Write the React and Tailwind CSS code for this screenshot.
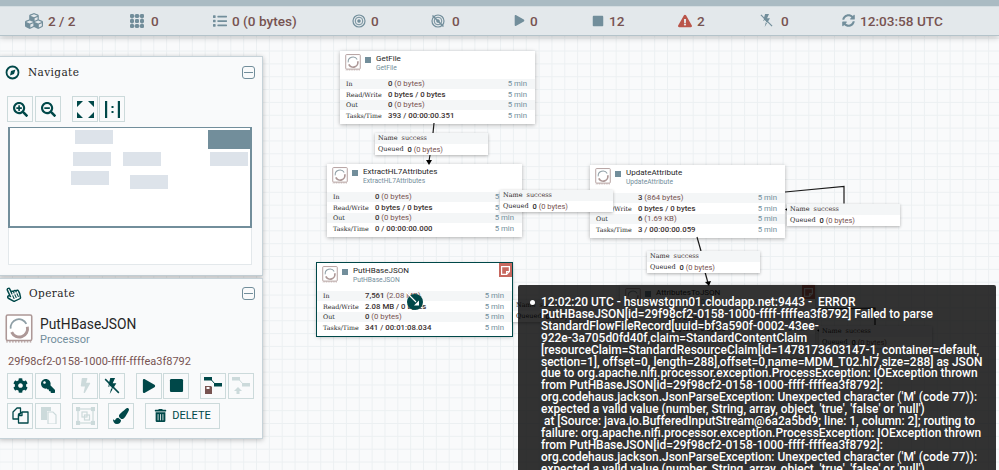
import {
  FaCog, FaKey, FaBolt, FaPlay, FaStop, FaTrashAlt, FaPaintBrush, FaSearchPlus, FaSearchMinus,
  FaExclamationTriangle, FaCubes, FaSyncAlt, FaList, FaRegHandPointer,
} from 'react-icons/fa'

const STATUS = [
  { w: 'w-[105px]', icon: <FaCubes size={18} className="text-[#728e9b]" />, text: '2 / 2' },
  { w: 'w-[83px]', icon: <GridIcon />, text: '0', gap: 'gap-[7px]' },
  { w: 'w-[139px]', icon: <FaList size={14} className="text-[#728e9b]" />, text: '0 (0 bytes)' },
  { w: 'w-[79px]', icon: <TargetIcon />, text: '0' },
  { w: 'w-[83px]', icon: <TargetIcon off />, text: '0', gap: 'gap-[7px]' },
  { w: 'w-[78px]', icon: <FaPlay size={11} className="text-[#728e9b]" />, text: '0' },
  { w: 'w-[86px]', icon: <FaStop size={12} className="text-[#728e9b]" />, text: '12' },
  { w: 'w-[82px]', icon: <FaExclamationTriangle size={14} className="text-[#ba554a]" />, text: '2' },
  { w: 'w-[82px]', icon: <BoltOff size={13} color="#728e9b" bg="#e3e8eb" />, text: '0', gap: 'gap-[8px]' },
  { w: 'w-auto', icon: <FaSyncAlt size={13} className="text-[#728e9b]" />, text: '12:03:58 UTC' },
]

const NODES = [
  { name: 'GetFile', pos: 'left-[340px] top-[51px]', rows: [['0', ' (0 bytes)'], ['0 bytes / 0 bytes', ''], ['0', ' (0 bytes)'], ['393 / 00:00:00.351', '']] },
  { name: 'ExtractHL7Attributes', pos: 'left-[327px] top-[164px]', rows: [['0', ' (0 bytes)'], ['0 bytes / 0 bytes', ''], ['0', ' (0 bytes)'], ['0 / 00:00:00.000', '']] },
  { name: 'UpdateAttribute', pos: 'left-[590px] top-[165px]', rows: [['3', ' (864 bytes)'], ['0 bytes / 0 bytes', ''], ['6', ' (1.69 KB)'], ['3 / 00:00:00.059', '']] },
  { name: 'PutHBaseJSON', pos: 'left-[317px] top-[263px]', selected: true, bulletin: true, rows: [['7,561', ' (2.08 MB)'], ['2.08 MB / 0 bytes', ''], ['0', ' (0 bytes)'], ['341 / 00:01:08.034', '']] },
  { name: 'AttributesToJSON', pos: 'left-[620px] top-[285px]', bulletin: true, rows: [['0', ' (0 bytes)'], ['0 bytes / 0 bytes', ''], ['0', ' (0 bytes)'], ['0 / 00:00:00.000', '']] },
]
const LABELS = ['In', 'Read/Write', 'Out', 'Tasks/Time']

const CONNS = [
  'left-[375px] top-[133px]',
  'left-[500px] top-[190px]',
  'left-[787px] top-[204px]',
  'left-[647px] top-[251px]',
  'left-[513px] top-[300px]',
  'left-[819px] top-[326px]',
]

const MINIMAP = [
  ['w-[38px] h-[14px] left-[65px] top-[2px]', 'bg-[#dde3ea]'],
  ['w-[38px] h-[14px] left-[63px] top-[24px]', 'bg-[#dde3ea]'],
  ['w-[38px] h-[14px] left-[113px] top-[24px]', 'bg-[#dde3ea]'],
  ['w-[38px] h-[14px] left-[61px] top-[43px]', 'bg-[#dde3ea]'],
  ['w-[38px] h-[14px] left-[120px] top-[47px]', 'bg-[#dde3ea]'],
  ['w-[42px] h-[19px] left-[198px] top-[2px]', 'bg-[#728e9b]'],
  ['w-[38px] h-[14px] left-[200px] top-[24px]', 'bg-[#dde3ea]'],
]

const BULLETIN = [
  '12:02:20 UTC - hsuswstgnn01.cloudapp.net:9443 -  ERROR',
  'PutHBaseJSON[id=29f98cf2-0158-1000-ffff-ffffea3f8792] Failed to parse',
  'StandardFlowFileRecord[uuid=bf3a590f-0002-43ee-',
  '922e-3a705d0fd40f,claim=StandardContentClaim',
  '[resourceClaim=StandardResourceClaim[id=1478173603147-1, container=default,',
  'section=1], offset=0, length=288],offset=0,name=MDM_T02.hl7,size=288] as JSON',
  'due to org.apache.nifi.processor.exception.ProcessException: IOException thrown',
  'from PutHBaseJSON[id=29f98cf2-0158-1000-ffff-ffffea3f8792]:',
  "org.codehaus.jackson.JsonParseException: Unexpected character ('M' (code 77)):",
  "expected a valid value (number, String, array, object, 'true', 'false' or 'null')",
  ' at [Source: java.io.BufferedInputStream@6a2a5bd9; line: 1, column: 2]; routing to',
  'failure: org.apache.nifi.processor.exception.ProcessException: IOException thrown',
  'from PutHBaseJSON[id=29f98cf2-0158-1000-ffff-ffffea3f8792]:',
  "org.codehaus.jackson.JsonParseException: Unexpected character ('M' (code 77)):",
  "expected a valid value (number, String, array, object, 'true', 'false' or 'null')",
]

function GridIcon() {
  return (
    <svg width="14" height="14" viewBox="0 0 14 14" fill="#728e9b">
      {[0, 5, 10].map(y => [0, 5, 10].map(x => <rect key={`${x}${y}`} x={x} y={y} width="4" height="4" rx="1.3" />))}
      <path d="M2 2h10v10H2z" fill="none" stroke="#728e9b" strokeWidth=".8" />
    </svg>
  )
}

function TargetIcon({ off }) {
  return (
    <svg width="14" height="14" viewBox="0 0 14 14" fill="none" stroke="#728e9b">
      <circle cx="7" cy="7" r="6" strokeWidth="1.2" />
      <circle cx="7" cy="7" r="3.8" strokeWidth="1" />
      <circle cx="7" cy="7" r="1.5" fill="#728e9b" strokeWidth=".5" />
      {off && <path d="M1.5 1.5l11 11" strokeWidth="1.5" />}
    </svg>
  )
}

function BoltOff({ size = 14, color = '#004849', bg = '#f9fafb' }) {
  return (
    <svg width={size} height={size} viewBox="0 0 14 14" fill={color}>
      <path d="M5.5 0h4.2L7.6 4.6h3.2L5 14l1.7-6.6H3.4z" />
      <path d="M1 1l12 12" stroke={color} strokeWidth="1.3" />
      <path d="M0 2.2l11.5 11.5" stroke={bg} strokeWidth=".8" />
    </svg>
  )
}

function ProcIcon({ size = 16 }) {
  return (
    <svg width={size} height={size * 1.05} viewBox="0 0 28 30" fill="none">
      <rect x="1" y="1" width="26" height="26" rx="1.500" fill="#fff" stroke="#ad9897" strokeWidth="1.600" />
      <path d="M1 28.500h26" stroke="#ad9897" strokeWidth="1.400" strokeDasharray="1.500 1.500" />
      <path d="M5.500 15A8.500 8.500 0 0 1 21.500 10" stroke="#8f9fa6" strokeWidth="1.800" />
      <path d="M22.500 13A8.500 8.500 0 0 1 6.500 18.500" stroke="#ad9897" strokeWidth="3" />
    </svg>
  )
}

function Collapse() {
  return (
    <div className="w-[13px] h-[13px] rounded-[3px] border border-[#728e9b] flex items-center justify-center">
      <div className="w-[9px] h-[1.5px] bg-[#728e9b]" />
    </div>
  )
}

function Btn({ children, className = 'w-[26px]' }) {
  return (
    <div className={`h-[26px] border border-[#ccdadb] flex items-center justify-center ${className}`}>
      {children}
    </div>
  )
}

function FitIcon() {
  return (
    <svg width="17" height="17" viewBox="0 0 17 17" fill="#004849">
      <path d="M0 0h6L0 6zM17 0h-6l6 6zM0 17h6l-6-6zM17 17h-6l6-6z" />
    </svg>
  )
}

function ActualIcon() {
  return (
    <svg width="17" height="17" viewBox="0 0 17 17" fill="#004849">
      <path d="M1 0h2.200v17H1zM13.800 0H16v17h-2.200zM7.500 5h2v2h-2zM7.500 10h2v2h-2z" />
    </svg>
  )
}

function CopyIcon({ color }) {
  return (
    <svg width="17" height="17" viewBox="0 0 17 17" fill="none" stroke={color} strokeWidth="1.300" strokeLinejoin="round">
      <path d="M1 11V5l4-4h3.500v5L6.500 7v5H1z" fill="#f9fafb" />
      <path d="M6.500 16V8.500l3.500-3.500h6v11z" fill="#f9fafb" />
      <path d="M6.500 8.500H10V5" />
    </svg>
  )
}

function PasteIcon() {
  return (
    <svg width="17" height="17" viewBox="0 0 17 17" fill="#ccdadb">
      <path d="M1 0h10v4H7v9H1z" />
      <path d="M8 5h5l3 3v9H8z" fill="none" stroke="#ccdadb" strokeWidth="1.200" />
    </svg>
  )
}

function CreateTemplate({ off }) {
  const c = off ? '#ccdadb' : '#004849'
  return (
    <svg width="18" height="18" viewBox="0 0 18 18" fill={c}>
      <rect x="0" y="0" width="8" height="3.500" />
      <rect x="10" y="6" width="8" height="3.500" />
      <path d="M7 2.500l4 4.500" stroke={c} fill="none" />
      {off
        ? <path d="M6 10l4 4H7.500v3h-3v-3H2z" />
        : <path d="M1 9h6l1 1v7H1z M2.500 10v2h3v-2z" fill="#775351" />}
    </svg>
  )
}

function GroupIcon() {
  return (
    <svg width="19" height="18" viewBox="0 0 19 18" fill="none" stroke="#ccdadb" strokeWidth="1.200">
      <rect x="2" y="2" width="15" height="14" />
      <rect x="0.500" y="0.500" width="3" height="3" fill="#ccdadb" />
      <rect x="15.500" y="0.500" width="3" height="3" fill="#ccdadb" />
      <rect x="0.500" y="14.500" width="3" height="3" fill="#ccdadb" />
      <rect x="15.500" y="14.500" width="3" height="3" fill="#ccdadb" />
      <rect x="6" y="5" width="5" height="5" />
      <rect x="8.500" y="8" width="5" height="5" />
    </svg>
  )
}

function Node({ node }) {
  return (
    <div className={`absolute ${node.pos} w-[195px] h-[73px] bg-white shadow-[0_1px_4px_rgba(0,0,0,0.3)] ${node.selected ? 'outline outline-1 outline-[#004849]' : ''}`}>
      <div className="flex h-[28px] pl-[5px] pt-[3px]">
        <ProcIcon />
        <div className="w-[6px] h-[6px] bg-[#728e9b] ml-[4px] mt-[3px]" />
        <div className="ml-[5px] leading-none">
          <div className="font-['Roboto',sans-serif] text-[8px] text-[#262626] mt-[1px] whitespace-nowrap">{node.name}</div>
          <div className="font-['Roboto',sans-serif] text-[6.7px] text-[#728e9b] mt-[2px] whitespace-nowrap">{node.name}</div>
        </div>
      </div>
      {LABELS.map((label, i) => (
        <div key={label} className={`flex items-center pl-[6px] pr-[8px] text-[7.8px] ${i === 3 ? 'h-[12px]' : 'h-[10.3px]'} ${i % 2 === 0 ? 'bg-[#f4f6f7]' : 'bg-white'}`}>
          <span className="w-[42px] font-['DejaVu_Serif',serif] text-[6.3px] text-[#262626] whitespace-nowrap">{label}</span>
          <span className="flex-1 font-['Roboto',sans-serif] font-medium text-[#3a3130] whitespace-nowrap">
            {node.rows[i][0]}<span className="font-normal text-[#775351]">{node.rows[i][1]}</span>
          </span>
          <span className="font-['Roboto',sans-serif] text-[#728e9b]">5 min</span>
        </div>
      ))}
      {node.bulletin && (
        <div className="absolute right-0 top-0 w-[13px] h-[14px] bg-[#c7685f] flex items-center justify-center">
          <svg width="9" height="9" viewBox="0 0 9 9" fill="none" stroke="#fff" strokeWidth="1.200">
            <path d="M.6.6h7.800v5L5.600 8.400H.6z" />
            <path d="M5.600 8.400V5.600h2.800" />
          </svg>
        </div>
      )}
    </div>
  )
}

function ConnLabel({ pos }) {
  return (
    <div className={`absolute ${pos} w-[113px] bg-white shadow-[0_1px_3px_rgba(0,0,0,0.3)] text-[6.5px] text-[#262626] leading-none font-['DejaVu_Serif',serif]`}>
      <div className="h-[11px] flex items-center pl-[3px] gap-[4px] bg-[#f4f6f7] whitespace-nowrap">
        <span>Name</span><span className="text-[#4a3a39]">success</span>
      </div>
      <div className="h-[11px] flex items-center pl-[3px] gap-[4px] whitespace-nowrap">
        <span>Queued</span>
        <span className="font-['Roboto',sans-serif] text-[7.5px]"><b className="font-medium">0</b> <span className="text-[#775351]">(0 bytes)</span></span>
      </div>
    </div>
  )
}

function Links() {
  return (
    <svg className="absolute inset-0 pointer-events-none" width="999" height="470" fill="none" stroke="#1a1a1a" strokeWidth="1.200">
      <path d="M434 123l-1 10" />
      <path d="M430 155l-1 6" />
      <path d="M426 160h6l-3 5z" fill="#000" stroke="none" />
      <path d="M785 192l59-5.500v17" />
      <path d="M789 207v5l-4-2.500z" fill="#000" stroke="none" />
      <path d="M697 237l4 14" />
      <path d="M705 272l3 11" />
      <path d="M705 282l6-1-2 5z" fill="#000" stroke="none" />
      <path d="M816 309l59-1v17" />
      <path d="M821 328v5l-4-2.500z" fill="#000" stroke="none" />
    </svg>
  )
}

export default function App() {
  return (
    <div className="relative w-[999px] h-[470px] overflow-hidden bg-[#f9fafb] bg-[linear-gradient(to_right,#ecf0f2_1px,transparent_1px),linear-gradient(to_bottom,#ecf0f2_1px,transparent_1px)] bg-[size:12.85px_12.85px] bg-[position:12px_12px]">
      {/* Status bar */}
      <div className="relative z-20 shadow-[0_2px_6px_rgba(0,0,0,0.2)]">
        <div className="h-[6px] bg-[#aabbc3]" />
        <div className="h-[30px] bg-[#e3e8eb] border-t border-b border-t-[#d4dde1] border-b-[#b4c3ca] pl-[25px] flex items-center font-['Roboto',sans-serif] font-medium text-[13.6px] text-[#775351]">
          {STATUS.map((s, i) => (
            <div key={i} className={`flex items-center shrink-0 ${s.w} ${s.gap || 'gap-[5px]'}`}>
              {s.icon}<span>{s.text}</span>
            </div>
          ))}
        </div>
      </div>

      {/* Canvas */}
      {NODES.map(n => <Node key={n.name} node={n} />)}
      <Links />
      {CONNS.map(c => <ConnLabel key={c} pos={c} />)}

      <div className="absolute left-[407px] top-[294px] w-[16px] h-[16px] rounded-full bg-[#004849] flex items-center justify-center">
        <svg width="16" height="16" viewBox="0 0 16 16" className="overflow-visible">
          <path d="M-1-2L9 8" stroke="#fff" strokeWidth="1.100" />
          <path d="M12 11.500V6.500L7 11.500z" fill="#fff" />
        </svg>
      </div>

      {/* Navigate */}
      <div className="absolute z-10 left-[-1px] top-[56px] w-[264px] h-[220px] bg-[#f9fafb] border border-[#c6d2d8] shadow-[0_1px_5px_rgba(0,0,0,0.25)] pl-[7px] pr-[7px]">
        <div className="flex items-center justify-between h-[30px] pt-[1px] -ml-[2px]">
          <div className="flex items-center gap-[8px]">
            <svg width="15" height="15" viewBox="0 0 15 15" fill="none" stroke="#004849">
              <circle cx="7.500" cy="7.500" r="6" strokeWidth="1.800" />
              <path d="M10.500 4.500L9 9 5 10.500 6 6z" fill="#004849" stroke="none" />
            </svg>
            <span className="font-['DejaVu_Serif',serif] text-[10.5px] tracking-[0.4px] text-[#262626]">Navigate</span>
          </div>
          <Collapse />
        </div>
        <div className="flex mt-[9px]">
          <div className="flex gap-[2px]">
            <Btn><FaSearchPlus size={15} className="text-[#004849]" /></Btn>
            <Btn><FaSearchMinus size={15} className="text-[#004849]" /></Btn>
          </div>
          <div className="flex gap-[1px] ml-[11px]">
            <Btn><FitIcon /></Btn>
            <Btn><ActualIcon /></Btn>
          </div>
        </div>
        <div className="mt-[5px] ml-[1px] w-[244px] h-[138px] bg-white border border-[#e3e8eb]">
          <div className="relative h-[101px] border-2 border-t-1 border-[#728e9b] -m-px">
            {MINIMAP.map(([box, color], i) => <div key={i} className={`absolute ${box} ${color}`} />)}
          </div>
        </div>
      </div>

      {/* Operate */}
      <div className="absolute z-10 left-[-1px] top-[278px] w-[264px] h-[161px] bg-[#f9fafb] border border-[#c6d2d8] shadow-[0_1px_5px_rgba(0,0,0,0.25)] pl-[7px] pr-[7px]">
        <div className="flex items-center justify-between h-[26px] pt-[3px] -ml-[2px]">
          <div className="flex items-center gap-[8px]">
            <FaRegHandPointer size={16} className="text-[#004849] -rotate-[25deg]" />
            <span className="font-['DejaVu_Serif',serif] text-[10.5px] tracking-[0.4px] text-[#262626]">Operate</span>
          </div>
          <Collapse />
        </div>
        <div className="flex items-start gap-[7px] -ml-[2px] mt-[9px]">
          <ProcIcon size={28} />
          <div className="font-['Roboto',sans-serif] leading-none mt-[4px]">
            <div className="text-[13.8px] text-[#262626]">PutHBaseJSON</div>
            <div className="text-[11px] text-[#728e9b] mt-[2px]">Processor</div>
          </div>
        </div>
        <div className="font-['Roboto',sans-serif] text-[11px] leading-none text-[#775351] ml-[1px] mt-[11px]">29f98cf2-0158-1000-ffff-ffffea3f8792</div>
        <div className="flex mt-[6px]">
          <div className="flex gap-[2px]">
            <Btn><FaCog size={15} className="text-[#004849]" /></Btn>
            <Btn><FaKey size={14} className="text-[#004849] -scale-x-100" /></Btn>
          </div>
          <div className="flex gap-[1px] ml-[11px]">
            <Btn><FaBolt size={15} className="text-[#ccdadb]" /></Btn>
            <Btn><BoltOff size={16} /></Btn>
          </div>
          <div className="flex gap-[1px] ml-[11px]">
            <Btn><FaPlay size={14} className="text-[#004849]" /></Btn>
            <Btn><FaStop size={15} className="text-[#004849]" /></Btn>
          </div>
          <div className="flex gap-[2px] ml-[11px]">
            <Btn><CreateTemplate /></Btn>
            <Btn><CreateTemplate off /></Btn>
          </div>
        </div>
        <div className="flex mt-[4px]">
          <div className="flex gap-[2px]">
            <Btn><CopyIcon color="#004849" /></Btn>
            <Btn><PasteIcon /></Btn>
          </div>
          <Btn className="w-[26px] ml-[11px]"><GroupIcon /></Btn>
          <Btn className="w-[26px] ml-[10px]"><FaPaintBrush size={16} className="text-[#004849]" /></Btn>
          <Btn className="w-[75px] ml-[11px] gap-[5px]">
            <FaTrashAlt size={13} className="text-[#004849]" />
            <span className="font-['Roboto',sans-serif] text-[11px] text-[#004849]">DELETE</span>
          </Btn>
        </div>
      </div>

      {/* Bulletin tooltip */}
      <div className="absolute z-30 left-[518px] top-[285px] w-[478px] h-[190px] rounded-[2px] bg-black/80 pl-[23px] pt-[12px] font-['Roboto',sans-serif] font-medium text-[11.95px] leading-[11.9px] text-white">
        <div className="absolute left-[12px] top-[15px] w-[5px] h-[5px] rounded-full bg-white" />
        {BULLETIN.map((line, i) => <div key={i} className="whitespace-pre">{line}</div>)}
      </div>
    </div>
  )
}
